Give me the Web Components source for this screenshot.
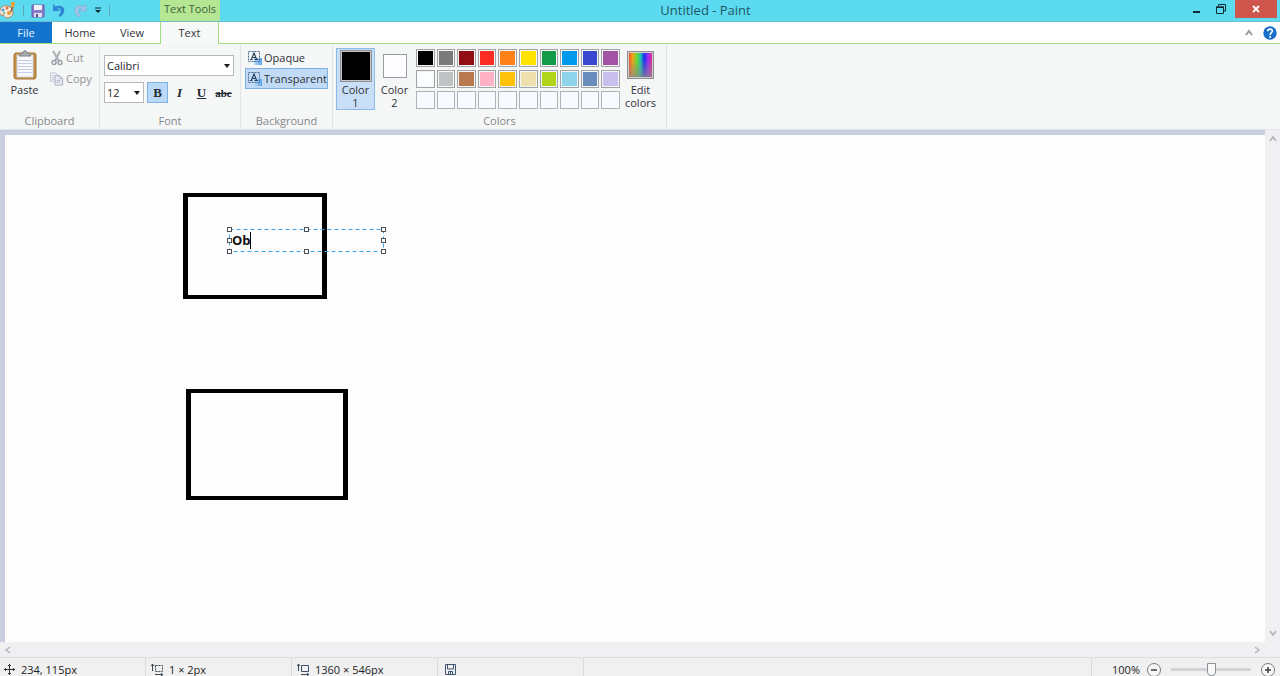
<!DOCTYPE html>
<html lang="en">
<head>
<meta charset="utf-8">
<title>Untitled - Paint</title>
<style>
html,body{margin:0;height:100%;overflow:hidden}
body{font:11px/16px "Open Sans","Noto Sans",sans-serif;color:#303338;background:#f0f0f1}
</style>
</head>
<body>
<paint-app></paint-app>
<script>
const define = (name, html, setup) => {
  const tpl = document.createElement('template');
  tpl.innerHTML = html;
  customElements.define(name, class extends HTMLElement {
    constructor() {
      super();
      this.attachShadow({mode: 'open'}).append(tpl.content.cloneNode(true));
    }
    connectedCallback() { if (setup && !this.ready) { this.ready = true; setup(this, this.shadowRoot); } }
  });
};
const svg = (w, h, body) => `<svg width="${w}" height="${h}" viewBox="0 0 ${w} ${h}" fill="none" aria-hidden="true">${body}</svg>`;
const background = `<path fill="url(#bg)" d="M7 8h8v7H7z"/><defs><linearGradient id="bg"><stop stop-color="#b9dcf8"/><stop offset="1" stop-color="#59a4ea"/></linearGradient></defs><path d="M1.500 1.500h11v10h-11z" stroke="#4a6b90" stroke-dasharray="2 1"/><path d="M3 9.500h2.500M7.500 9.500H11M4.500 9L7 3L9.500 9M5.500 7.500h3" stroke="#27435f" stroke-width="1.200"/>`;
const icons = {
  palette: svg(16,18,`<path d="M0 8C1 3 9 2 12 7c3 5-1 9-5 9-3 0-2-3-4-3-3 1-4-2-3-5z" fill="#f7e9dc" stroke="#b57e59"/><circle cx="3" cy="8" r="1.500" fill="#43a3dc"/><circle cx="7" cy="6" r="1.500" fill="#e47138"/><circle cx="9" cy="11" r="2" fill="#e9953c"/><circle cx="4" cy="11" r="1" fill="#57ad62"/><path d="M11 10l2-6" stroke="#9b7345" stroke-width="2"/><path d="M11 0h4l-1 5h-3z" fill="#ef9f35"/>`),
  save: svg(14,14,`<path d="M1 1h12v12H1z" fill="#8b7bc9" stroke="#6d5eae"/><path d="M3 1h8v5H3z" fill="#f3f2fb"/><path d="M3 9h8v4H3z" fill="#dedfef"/><path d="M5 10h2v3H5z" fill="#5d5480"/>`),
  undo: svg(14,15,`<path d="M1 1v7h7L5.500 5.500c3-1 5 3 1 7L8 14c8-5 4-14-4.500-10.500z" fill="#2f86d4"/>`),
  redo: svg(14,15,`<path d="M13 1v7H6l2.500-2.500c-3-1-5 3-1 7L6 14c-8-5-4-14 4.500-10.500z" fill="#9fc6e4" stroke="#84a9cf" stroke-width=".7"/>`),
  qat: svg(8,7,`<path d="M1 1h6" stroke="#10262e"/><path d="M1 3h6L4 6z" fill="#10262e"/>`),
  min: svg(8,8,`<path d="M0 6h7v2H0z" fill="#102b34"/>`),
  restore: svg(10,10,`<path d="M2.500 2V.5h7V7H8" stroke="#102b34"/><path d="M.5 3h7v6.500h-7z" stroke="#102b34"/><path d="M0 2.500h8V4H0z" fill="#102b34"/>`),
  close: svg(8,8,`<path d="M1 1l6 6M7 1L1 7" stroke="#fff" stroke-width="1.800"/>`),
  up: svg(8,8,`<path d="M1 6l3-4 3 4" stroke="#999c9f" stroke-width="2"/>`),
  upLight: svg(8,8,`<path d="M1 6l3-4 3 4" stroke="#b4b6ba" stroke-width="1.800"/>`),
  help: svg(14,14,`<circle cx="7" cy="7" r="6.700" fill="#176fc9"/><path d="M4.700 5.200C4.800 2.300 9.600 2.500 9.300 5.200 9 6.800 7.200 6.800 7.200 9" stroke="#fff" stroke-width="1.700"/><path d="M6.300 10h1.800v1.800H6.300z" fill="#fff"/>`),
  paste: svg(24,30,`<rect x="1" y="3" width="22" height="26" rx="2" fill="#c18b43" stroke="#a97839"/><path d="M4 5h16v22H4z" fill="#f7f9fc" stroke="#ccd4df"/><path d="M5 10.500h14M5 13.500h14M5 16.500h14M5 19.500h14M5 22.500h14" stroke="#c3cede"/><path d="M6 6l2-3h2c0-3 4-3 4 0h2l2 3z" fill="#a8abae" stroke="#7d8286"/>`),
  cut: svg(12,16,`<path d="M2 1l6 10M9 1L4 11" stroke="#a9afb6" stroke-width="2"/><circle cx="3" cy="12.500" r="2" stroke="#989fa7" stroke-width="1.400"/><circle cx="9" cy="12.500" r="2" stroke="#989fa7" stroke-width="1.400"/>`),
  copy: svg(16,16,`<path d="M1.500 1.500H7l2 2v7H1.500z" fill="#f1f3f7" stroke="#bcc2d1"/><path d="M3 4.500h3M3 6.500h3M3 8.500h3" stroke="#c4cad8"/><path d="M6.500 4.500h5l3 3v7h-8z" fill="#e9edf5" stroke="#a5aec2"/><path d="M11.500 5v2.500H14M8 9.500h4M8 11.500h4" stroke="#aeb8cc"/>`),
  background: svg(16,16,background),
  drop: svg(6,4,`<path d="M0 0h6L3 4z" fill="#181b20"/>`),
  left: svg(8,8,`<path d="M6 1L2 4l4 3" stroke="#b4b6ba" stroke-width="1.500"/>`),
  right: svg(8,8,`<path d="M2 1l4 3-4 3" stroke="#b4b6ba" stroke-width="1.500"/>`),
  down: svg(8,8,`<path d="M1 2l3 4 3-4" stroke="#b4b6ba" stroke-width="1.800"/>`),
  move: svg(11,11,`<path d="M5.500 0v11M0 5.500h11" stroke="#33383d"/><path d="M4 2l1.500-1.500L7 2M4 9l1.500 1.500L7 9M2 4L.5 5.500 2 7M9 4l1.500 1.500L9 7" stroke="#33383d"/>`),
  select: svg(12,12,`<path d="M1.500 0v7M0 2l1.500-2L3 2M4 10.500h7M10 9l2 1.500-2 1.500" stroke="#3c4752"/><path d="M4.500 1.500h7v6h-7z" stroke="#3c4752" stroke-dasharray="2 1"/>`),
  size: svg(12,12,`<path d="M1.500 0v7M0 2l1.500-2L3 2M4 10.500h7M10 9l2 1.500-2 1.500" stroke="#3c4e66"/><path d="M4.500 1.500h7v6h-7z" stroke="#3c4e66"/>`),
  disk: svg(11,11,`<path d="M.5.5h10v10h-10z" stroke="#40566e"/><path d="M2.500 1v4h6V1M3.500 10V7.500h4V10M5.500 8v2" stroke="#40566e"/>`),
  minus: svg(16,16,`<circle cx="8" cy="8" r="6.500" fill="#f8f8f8" stroke="#77797c"/><path d="M5 8h6" stroke="#3c3e40" stroke-width="1.500"/>`),
  plus: svg(16,16,`<circle cx="8" cy="8" r="6.500" fill="#f8f8f8" stroke="#77797c"/><path d="M5 8h6M8 5v6" stroke="#3c3e40" stroke-width="1.500"/>`)
};
define('paint-icon', `<style>:host{display:inline-flex;flex:none}svg{display:block}</style>`,
  (el, root) => root.append(document.createRange().createContextualFragment(icons[el.getAttribute('name')])));

const reset = `:host,*{box-sizing:border-box}button{font:inherit;color:inherit;background:none;border:0;padding:0;margin:0;display:flex;align-items:center;justify-content:center}a{color:inherit;text-decoration:none}`;

define('title-bar', `<style>${reset}
:host{display:grid;grid-template-columns:160px 60px 1fr auto;height:22px;background:#5bdaf0;border-bottom:1px solid #6fbccb;overflow:hidden}
.quick{display:flex;align-items:center;gap:7px}
.quick i{width:1px;height:11px;background:#57a9ba}
.tools{background:#b5e694;color:#41603b;text-align:center;line-height:18px}
h1{margin:0;font:13px/21px "Open Sans","Noto Sans",sans-serif;color:#215764;text-align:center;padding-left:6px}
.win{display:flex;align-items:flex-start;padding-right:3px}
.win button{width:24px;height:18px}
.win .close{width:42px;background:#ce564c;margin-left:2px}
</style>
<div class="quick"><paint-icon name="palette"></paint-icon><i></i><button aria-label="Save"><paint-icon name="save"></paint-icon></button><button aria-label="Undo"><paint-icon name="undo"></paint-icon></button><button aria-label="Redo"><paint-icon name="redo"></paint-icon></button><button aria-label="Customize"><paint-icon name="qat"></paint-icon></button><i></i></div>
<div class="tools">Text Tools</div><h1><slot></slot></h1>
<div class="win"><button aria-label="Minimize"><paint-icon name="min"></paint-icon></button><button aria-label="Restore"><paint-icon name="restore"></paint-icon></button><button class="close" aria-label="Close"><paint-icon name="close"></paint-icon></button></div>`);

define('tab-strip', `<style>${reset}
:host{display:flex;height:22px;background:#fff;border-bottom:1px solid #a4dc7e}
nav{display:flex;flex:1}
a{display:block;width:52px;text-align:center;line-height:22px}
.file{background:#1473cc;color:#e8f4ff;height:21px}
.home{width:56px}
.view{width:48px;margin-right:4px}
.on{width:59px;height:22px;background:#f7f8f8;border:1px solid #a4dc7e;border-width:0 1px}
.end{display:flex;align-items:center;gap:10px;padding-right:3px}
</style>
<nav><a class="file" href="#file">File</a><a class="home" href="#home">Home</a><a class="view" href="#view">View</a><a class="on" href="#text" aria-current="page">Text</a></nav>
<div class="end"><button aria-label="Collapse ribbon"><paint-icon name="up"></paint-icon></button><button aria-label="Help"><paint-icon name="help"></paint-icon></button></div>`);

define('ribbon-group', `<style>
:host{display:flex;flex-direction:column;box-sizing:border-box;height:85px;border-right:1px solid #e1e3e5}
.body{flex:1;display:flex}
.name{text-align:center;line-height:16px;color:#85888c}
</style><div class="body"><slot></slot></div><div class="name"></div>`,
  (el, root) => root.querySelector('.name').textContent = el.getAttribute('label'));

define('clipboard-tools', `<style>${reset}
:host{display:flex;flex:1;align-items:flex-start;padding-top:6px}
.paste{flex-direction:column;width:49px;gap:2px}
.side{display:flex;flex-direction:column;gap:5px;color:#909397}
.side button{justify-content:flex-start;gap:2px;height:16px}
.side paint-icon{width:15px;justify-content:center}
</style><button class="paste"><paint-icon name="paste"></paint-icon>Paste</button>
<div class="side"><button><paint-icon name="cut"></paint-icon>Cut</button><button><paint-icon name="copy"></paint-icon>Copy</button></div>`);

define('drop-down', `<style>
:host{display:grid;align-items:center;box-sizing:border-box;height:21px;border:1px solid #b5b8bd;background:#fff}
select,paint-icon{grid-area:1/1}
select{appearance:none;width:100%;height:19px;border:0;background:none;padding:0 2px;font:inherit;color:#25282d;outline:0}
paint-icon{justify-self:end;margin-right:3px;pointer-events:none}
</style><select></select><paint-icon name="drop"></paint-icon>`,
  (el, root) => { const s = root.querySelector('select'); s.setAttribute('aria-label', el.getAttribute('label')); s.add(new Option(el.getAttribute('value'))); });

define('font-tools', `<style>${reset}
:host{display:flex;flex:1;flex-direction:column;gap:6px;padding:11px 6px 0 4px}
.row{display:flex;gap:1px}
drop-down.size{width:40px;margin-right:2px}
button{width:21px;height:21px;font:13px/18px "Liberation Serif",serif;color:#242a32;border:1px solid transparent}
.b{font-weight:bold;background:#b9d9f7;border-color:#7fb1e3}
.i{font-style:italic;font-weight:bold}
.u{font-weight:bold;text-decoration:underline}
.s{font-size:11px;font-weight:bold;text-decoration:line-through}
</style><drop-down label="Font family" value="Calibri"></drop-down>
<div class="row"><drop-down class="size" label="Font size" value="12"></drop-down><button class="b" aria-label="Bold" aria-pressed="true">B</button><button class="i" aria-label="Italic">I</button><button class="u" aria-label="Underline">U</button><button class="s" aria-label="Strikethrough">abc</button></div>`);

define('background-tools', `<style>${reset}
:host{display:flex;flex:1;flex-direction:column;padding:3px 4px 0 4px}
button{height:21px;justify-content:flex-start;gap:1px;padding-left:1px;border:1px solid transparent;white-space:nowrap}
.on{background:#c1dbf7;border-color:#7fb0e4}
</style><button><paint-icon name="background"></paint-icon>Opaque</button><button class="on" aria-pressed="true"><paint-icon name="background"></paint-icon>Transparent</button>`);

define('color-tools', `<style>${reset}
:host{display:flex;flex:1;align-items:flex-start;padding:4px 0 0 3px}
.pick{flex-direction:column;justify-content:flex-start;width:39px;height:62px;line-height:13px;border:1px solid transparent}
.on{background:#c9dff7;border-color:#8db9e6}
.chip{display:flex;align-items:center;height:34px}
.chip::before{content:"";width:22px;height:22px;background:#fdfdff;border:1px solid #999ca0}
.on .chip::before{width:30px;height:30px;background:#000;border:1px solid #8b8f94;box-shadow:inset 0 0 0 1px #c6c9cd}
.grid{display:grid;grid-template-columns:repeat(10,1fr);gap:3px 2px;width:204px;padding-top:1px;margin:0 1px 0 2px}
.grid button{height:18px;border:1px solid #a2a3a6;padding:1px;background:var(--c) content-box #e5e5e7}
.grid button.blank{border-color:#b1b2b5;background:#f9faff}
.spectrum{width:27px;height:28px;margin:2px 0 4px;border:1px solid #8e8e90;box-shadow:inset 0 0 0 1px #d2cfcf;background:linear-gradient(transparent 30%,#888c),linear-gradient(90deg,#f0402f,#f3a11c 18%,#6cd82b 35%,#1fc3ae 50%,#1c30f0 65%,#9c2cf0 80%,#f0307c)}
</style>
<button class="pick on" aria-pressed="true"><span class="chip"></span><span>Color</span><span>1</span></button><button class="pick"><span class="chip"></span><span>Color</span><span>2</span></button>
<div class="grid"></div>
<button class="pick"><span class="spectrum"></span><span>Edit</span><span>colors</span></button>`,
  (el, root) => {
    const colors = '#000 #7b7b7c #930d15 #fb2c21 #ff8119 #fee300 #139b49 #0099ee #3a48d0 #a453a4 #fcfdff #c1c2c4 #b9784e #ffb2c5 #ffc20a #eedfae #b0d418 #8dd3e9 #688dbd #c9bfee'.split(' ');
    for (let i = 0; i < 30; i++) {
      const b = document.createElement('button');
      b.setAttribute('aria-label', colors[i] || 'Empty color');
      if (colors[i]) b.style.setProperty('--c', `linear-gradient(${colors[i]},${colors[i]})`); else b.className = 'blank';
      root.querySelector('.grid').append(b);
    }
  });

define('paint-ribbon', `<style>
:host{display:flex;box-sizing:border-box;height:86px;background:#f5f6f6;border-bottom:1px solid #dfe5e8}
.a{width:100px}.b{width:141px}.c{width:92px}.d{width:334px}
</style>
<ribbon-group class="a" label="Clipboard"><clipboard-tools></clipboard-tools></ribbon-group>
<ribbon-group class="b" label="Font"><font-tools></font-tools></ribbon-group>
<ribbon-group class="c" label="Background"><background-tools></background-tools></ribbon-group>
<ribbon-group class="d" label="Colors"><color-tools></color-tools></ribbon-group>`);

define('text-frame', `<style>
:host{display:flex;align-items:center;box-sizing:border-box}
svg{position:absolute;inset:0;overflow:visible}
input{width:18px;height:20px;border:0;padding:0;margin-left:3px;background:none;outline:0;font:bold 13px/20px "Open Sans",sans-serif;color:#111}
i{width:1px;height:17px;background:#000}
</style><svg width="100%" height="100%" aria-hidden="true"><rect x=".5" y=".5" width="100%" height="100%" fill="none" stroke="#3f9fe6" stroke-dasharray="4 3"/><g></g></svg><input aria-label="Text on canvas" value="Ob"><i></i>`,
  (el, root) => {
    const g = root.querySelector('g');
    for (const [x, y] of [[0,0],[50,0],[100,0],[0,50],[100,50],[0,100],[50,100],[100,100]]) {
      const r = document.createElementNS('http://www.w3.org/2000/svg', 'rect');
      for (const [k, v] of Object.entries({x: x + '%', y: y + '%', width: 4, height: 4, fill: '#fff', stroke: '#4c4f53', transform: 'translate(-1.5 -1.5)'})) r.setAttribute(k, v);
      g.append(r);
    }
  });

define('drawing-area', `<style>${reset}
:host{display:grid;grid-template:1fr 15px/1fr 15px;flex:1;min-height:0;background:#f0f0f2}
.sheet{position:relative;background:#fdfdfe;border:solid #c9cfe0;border-width:5px 0 0 5px;overflow:hidden}
.box{position:absolute;border:solid #000;border-width:4px 5px}
.one{left:178px;top:58px;width:144px;height:106px}
.two{left:181px;top:254px;width:162px;height:111px}
text-frame{position:absolute;left:224px;top:94px;width:154px;height:22px}
.v{display:flex;flex-direction:column;justify-content:space-between;align-items:center;padding:5px 0}
.h{display:flex;justify-content:space-between;align-items:center;padding:0 4px}
</style>
<div class="sheet"><div class="box one"></div><div class="box two"></div><text-frame></text-frame></div>
<div class="v"><button aria-label="Scroll up"><paint-icon name="upLight"></paint-icon></button><button aria-label="Scroll down"><paint-icon name="down"></paint-icon></button></div>
<div class="h"><button aria-label="Scroll left"><paint-icon name="left"></paint-icon></button><button aria-label="Scroll right"><paint-icon name="right"></paint-icon></button></div>`);

define('status-bar', `<style>${reset}
:host{display:flex;height:24px;border-top:1px solid #dcdde0;background:#f0f0f1;color:#1c1f23}
.cell{display:flex;align-items:center;gap:6px;width:146px;padding-left:5px;border-right:1px solid #dadbde}
.first{padding-left:4px}
.disk{padding-left:7px}
.last{flex:1}
.zoom{display:flex;align-items:center;padding-left:20px}
label{margin-right:6px}
input{appearance:none;width:80px;height:16px;margin:0 9px;background:linear-gradient(#d3d4d7,#d3d4d7) center/100% 3px no-repeat}
input::-webkit-slider-thumb{appearance:none;width:9px;height:13px;background:#f8f8f8;border:1px solid #8d9094;border-radius:0 0 4px 4px}
.zoom button:last-child{margin-right:4px}
</style>
<div class="cell first"><paint-icon name="move"></paint-icon>234, 115px</div>
<div class="cell"><paint-icon name="select"></paint-icon>1 × 2px</div>
<div class="cell"><paint-icon name="size"></paint-icon>1360 × 546px</div>
<div class="cell disk"><paint-icon name="disk"></paint-icon></div>
<div class="cell last"></div>
<div class="zoom"><label for="z">100%</label><button aria-label="Zoom out"><paint-icon name="minus"></paint-icon></button><input id="z" type="range" min="0" max="100" value="50"><button aria-label="Zoom in"><paint-icon name="plus"></paint-icon></button></div>`);

define('paint-app', `<style>
:host{display:flex;flex-direction:column;height:calc(100vh + 5px)}
title-bar,tab-strip,paint-ribbon,status-bar{flex:none}
</style><title-bar>Untitled - Paint</title-bar><tab-strip></tab-strip><paint-ribbon></paint-ribbon><drawing-area></drawing-area><status-bar></status-bar>`);
</script>
</body>
</html>
